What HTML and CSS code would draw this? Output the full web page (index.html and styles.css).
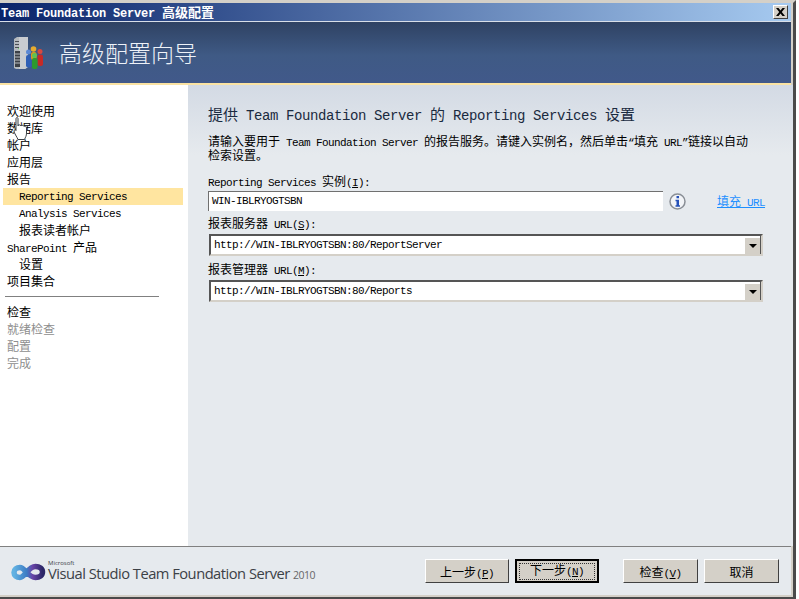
FILE: index.html
```html
<!DOCTYPE html>
<html lang="zh-CN">
<head>
    <meta charset="UTF-8">
    <title>Team Foundation Server 高级配置</title>
    <link rel="stylesheet" href="styles.css">
</head>
<body>
<div class="window">
    <div class="titlebar">
        <span class="title-text"><span class="m">Team Foundation Server </span>高级配置</span>
        <span class="close-btn">
            <svg width="9" height="8" viewBox="0 0 9 8"><path d="M0 0h2.500l2 2.500L6.500 0H9L5.800 4 9 8H6.500l-2-2.500-2 2.500H0l3.200-4z" fill="#000"/></svg>
        </span>
    </div>

    <div class="banner">
        <svg class="banner-icon" width="32" height="34" viewBox="0 0 32 34">
            <path d="M1 3l3-2h11v30l-3 2H3l-2-1z" fill="#b4b9be"/>
            <path d="M6 1h9v30l-3 2H6z" fill="#c9ccd0"/>
            <path d="M2 5h4v1H2zM2 8h4v1H2zM2 11h4v1H2z" fill="#4a4e54"/>
            <path d="M2 15h5v16H2z" fill="#3c4046"/>
            <path d="M2 18h5M2 21h5M2 24h5M2 27h5" stroke="#b9bdc2" stroke-width="1"/>
            <rect x="5" y="12" width="1" height="1" fill="#6fd06a"/>
            <circle cx="15.500" cy="16" r="2.500" fill="#5b88d4"/>
            <rect x="13" y="19" width="5.500" height="12.500" rx="2" fill="#2f5fb5"/>
            <circle cx="27" cy="15.500" r="2.500" fill="#d8483f"/>
            <rect x="24.500" y="18.500" width="5.500" height="11.500" rx="2" fill="#c62a26"/>
            <circle cx="20.500" cy="13" r="2.800" fill="#e6ab2e"/>
            <rect x="18" y="16" width="5.500" height="8" rx="2" fill="#d8981e"/>
            <circle cx="21.500" cy="19.500" r="2.500" fill="#5cc254"/>
            <rect x="19" y="22" width="5.500" height="11" rx="2" fill="#2c9a2e"/>
        </svg>
        <span class="banner-title">高级配置向导</span>
    </div>

    <div class="main">
        <div class="nav">
            <div class="nav-item">欢迎使用</div>
            <div class="nav-item">数据库</div>
            <div class="nav-item">帐户</div>
            <div class="nav-item">应用层</div>
            <div class="nav-item">报告</div>
            <div class="nav-item sub lat current"><span class="m">Reporting Services</span></div>
            <div class="nav-item sub lat"><span class="m">Analysis Services</span></div>
            <div class="nav-item sub">报表读者帐户</div>
            <div class="nav-item"><span class="m">SharePoint </span>产品</div>
            <div class="nav-item sub">设置</div>
            <div class="nav-item">项目集合</div>
            <div class="nav-rule"></div>
            <div class="nav-item">检查</div>
            <div class="nav-item off">就绪检查</div>
            <div class="nav-item off">配置</div>
            <div class="nav-item off">完成</div>
        </div>

        <div class="content">
            <h1 class="heading">提供<span class="m"> Team Foundation Server </span>的<span class="m"> Reporting Services </span>设置</h1>
            <div class="desc">
                <div class="desc-line">请输入要用于<span class="m"> Team Foundation Server </span>的报告服务。请键入实例名，然后单击<span class="m">“</span>填充<span class="m"> URL”</span>链接以自动</div>
                <div class="desc-line">检索设置。</div>
            </div>

            <div class="label first"><span class="m">Reporting Services </span>实例<span class="m">(<u>I</u>):</span></div>
            <div class="instance-row">
                <div class="textbox"><span class="m">WIN-IBLRYOGTSBN</span></div>
                <svg class="info-icon" width="17" height="17" viewBox="0 0 17 17">
                    <circle cx="8.500" cy="8.500" r="7.500" fill="#f2f4f7" stroke="#8a8f96" stroke-width="1.500"/>
                    <path d="M7.500 3h2.500v2.200H7.500zM6.500 6.800h3.500v5.400h1v1.500H6.500v-1.500h1V8.300h-1z" fill="#2450b8"/>
                </svg>
                <a class="fill-link" href="#">填充<span class="m"> URL</span></a>
            </div>

            <div class="label">报表服务器<span class="m"> URL(<u>S</u>):</span></div>
            <div class="combo">
                <span class="combo-value m">http://WIN-IBLRYOGTSBN:80/ReportServer</span>
                <span class="combo-btn"><i class="arrow"></i></span>
            </div>

            <div class="label second">报表管理器<span class="m"> URL(<u>M</u>):</span></div>
            <div class="combo">
                <span class="combo-value m">http://WIN-IBLRYOGTSBN:80/Reports</span>
                <span class="combo-btn"><i class="arrow"></i></span>
            </div>
        </div>
    </div>

    <div class="footer">
        <div class="brand">
            <svg width="36" height="19" viewBox="0 0 36 19">
                <defs>
                    <linearGradient id="loop" x1="0" x2="1" y1="0" y2="0">
                        <stop offset="0" stop-color="#62b2e2"/>
                        <stop offset="0.45" stop-color="#3d7cc4"/>
                        <stop offset="0.65" stop-color="#6a45a8"/>
                        <stop offset="1" stop-color="#2c2768"/>
                    </linearGradient>
                </defs>
                <path d="M9 4.500c5 0 8 10 15.500 10 4 0 7-2.200 7-5.500s-3-5.500-7-5.500C17 3.500 14 14.500 9 14.500 5.500 14.500 3 12.500 3 9.500s2.500-5 6-5z" fill="none" stroke="url(#loop)" stroke-width="5.500"/>
            </svg>
            <span class="brand-text"><small class="brand-ms">Microsoft</small>Visual Studio Team Foundation Server <span class="brand-year">2010</span></span>
        </div>
        <div class="buttons">
            <button class="btn wide">上一步<span class="m">(<u>P</u>)</span></button>
            <button class="btn wide default"><span class="focus">下一步<span class="m">(<u>N</u>)</span></span></button>
            <button class="btn gap-left">检查<span class="m">(<u>V</u>)</span></button>
            <button class="btn">取消</button>
        </div>
    </div>

    <svg class="cursor" width="16" height="24" viewBox="0 0 16 24">
        <path d="M3 1.500c0-1.200 2-1.200 2 0V9c.5-1.500 2.500-1.500 3 0 .5-1 2.500-1 3 .5.500-.8 2.500-.5 2.500 1.500v5c0 3-1 4-2 6.500H5C4 20 1 16 1 14c0-1.500 1.500-1.500 2-.5z" fill="#fff" stroke="#3c4046" stroke-width="1"/>
    </svg>
</div>
</body>
</html>
```

FILE: styles.css
```css
html, body {
    margin: 0;
    padding: 0;
    background: #fff;
}

body {
    font-family: "Liberation Mono", "Noto Sans CJK SC", monospace;
    font-size: 12px;
    color: #000;
}

/* latin runs are 6px per character, the cjk around them stays 12px */
.m {
    font-family: "Liberation Mono", monospace;
    font-size: 11px;
    letter-spacing: -0.6px;
}

.window {
    position: relative;
    box-sizing: border-box;
    width: 796px;
    height: 599px;
    display: flex;
    flex-direction: column;
    border-top: 3px solid #d4d0c8;
    border-right: 3px solid #4a4a4a;
    border-bottom: 2px solid #4a4a4a;
    overflow: hidden;
    box-shadow: inset -2px -2px 0 #d4d0c8;
}

.titlebar {
    box-sizing: border-box;
    height: 19px;
    display: flex;
    align-items: center;
    justify-content: space-between;
    padding: 0 3px 2px 1px;
    margin-right: 2px;
    border-bottom: 1px solid #d8dee8;
    background: linear-gradient(to right, #0a246a, #a6caf0);
    color: #fff;
    font-weight: bold;
    font-size: 13px;
}

.titlebar .m {
    font-size: 12px;
    letter-spacing: -0.2px;
}

.close-btn {
    box-sizing: border-box;
    width: 15px;
    height: 14px;
    margin-top: 2px;
    display: flex;
    align-items: center;
    justify-content: center;
    background: #d4d0c8;
    border: 1px solid;
    border-color: #fff #404040 #404040 #fff;
}

.banner {
    height: 61px;
    margin-right: 2px;
    display: flex;
    align-items: center;
    gap: 14px;
    padding-left: 13px;
    background: linear-gradient(to bottom, #2f4263, #3f5a85 55%, #41598a);
    border-bottom: 2px solid #fbe3a3;
}

.banner-title {
    color: #eef2f8;
    font-family: "Noto Sans CJK SC", sans-serif;
    font-weight: 300;
    font-size: 23px;
    line-height: 1;
}

.main {
    flex: 1;
    display: flex;
    margin-right: 2px;
    min-height: 0;
}

.nav {
    width: 188px;
    flex-shrink: 0;
    box-sizing: border-box;
    padding: 18px 5px 0 3px;
    background: #fff;
}

.nav-item {
    height: 17px;
    line-height: 21px;
    padding-left: 4px;
    white-space: pre;
}

.nav-item.lat {
    line-height: 19px;
}

.nav-item.sub {
    padding-left: 16px;
}

.nav-item.current {
    background: #ffe5a0;
}

.nav-item.off {
    color: #8e8e8e;
}

.nav-rule {
    width: 154px;
    height: 1px;
    margin: 6px 0 7px 2px;
    background: #808080;
}

.content {
    flex: 1;
    box-sizing: border-box;
    padding: 21px 28px 0 20px;
    background: linear-gradient(to bottom, #d3dae4, #e6eaee 70px);
}

.heading {
    margin: 0;
    height: 20px;
    line-height: 20px;
    font-size: 15px;
    font-weight: normal;
    white-space: pre;
    color: #1a2a40;
}

.heading .m {
    font-size: 14px;
    letter-spacing: -0.4px;
}

.desc {
    margin-top: 10px;
    line-height: 14px;
}

.desc-line {
    white-space: pre;
}

.label {
    height: 14px;
    line-height: 14px;
    margin: 7px 0 2px;
    white-space: pre;
}

.label.first {
    margin: 12px 0 1px;
}

.label.second {
    margin-top: 8px;
}

.instance-row {
    display: flex;
    align-items: center;
}

.textbox {
    box-sizing: border-box;
    width: 455px;
    height: 20px;
    line-height: 18px;
    padding-left: 3px;
    background: #fff;
    border-top: 1px solid #707070;
    border-left: 1px solid #707070;
}

.info-icon {
    margin-left: 6px;
}

.fill-link {
    margin-left: 31px;
    color: #1e8fff;
    text-decoration: underline;
    white-space: pre;
}

.combo {
    box-sizing: border-box;
    width: 554px;
    height: 22px;
    margin-left: 1px;
    display: flex;
    align-items: center;
    justify-content: space-between;
    background: #fff;
    border: 2px solid;
    border-color: #555 #d4d0c8 #d4d0c8 #555;
    box-shadow: inset -1px 0 0 #555;
}

.combo-value {
    padding-left: 3px;
}

.combo-btn {
    box-sizing: border-box;
    width: 16px;
    height: 17px;
    margin-right: 1px;
    display: flex;
    align-items: center;
    justify-content: center;
    background: #d4d0c8;
    border-top: 1px solid #fff;
    border-left: 1px solid #fff;
}

.arrow {
    width: 0;
    height: 0;
    border-left: 4px solid transparent;
    border-right: 4px solid transparent;
    border-top: 4px solid #000;
}

.footer {
    height: 48px;
    margin-right: 2px;
    margin-bottom: 2px;
    display: flex;
    align-items: center;
    justify-content: space-between;
    padding: 0 12px 0 11px;
    background: #e6eaee;
    border-top: 1px solid #808080;
}

.brand {
    display: flex;
    align-items: center;
    gap: 1px;
    margin-top: 3px;
}

.brand-text {
    position: relative;
    top: 1px;
    font-family: "Open Sans", sans-serif;
    font-size: 14.700px;
    line-height: 14px;
    letter-spacing: -0.5px;
    color: #3c4146;
    white-space: pre;
}

.brand-ms {
    position: absolute;
    left: 0;
    top: -6px;
    font-size: 6px;
    line-height: 6px;
    letter-spacing: 0;
}

.brand-year {
    font-size: 10.500px;
    color: #666;
}

.buttons {
    display: flex;
    gap: 6px;
}

.btn {
    box-sizing: border-box;
    width: 75px;
    height: 24px;
    padding: 2px 0 0;
    font: inherit;
    color: #000;
    background: #d4d0c8;
    border: 1px solid;
    border-color: #fff #404040 #404040 #fff;
    white-space: pre;
}

.btn.wide {
    width: 84px;
}

.btn.gap-left {
    margin-left: 18px;
}

.btn.default {
    padding: 0;
    border: 2px solid #000;
}

.focus {
    display: block;
    height: 15px;
    margin: 2px;
    line-height: 17px;
    border: 1px dotted #333;
}

.cursor {
    position: absolute;
    left: 13px;
    top: 114px;
}
```
